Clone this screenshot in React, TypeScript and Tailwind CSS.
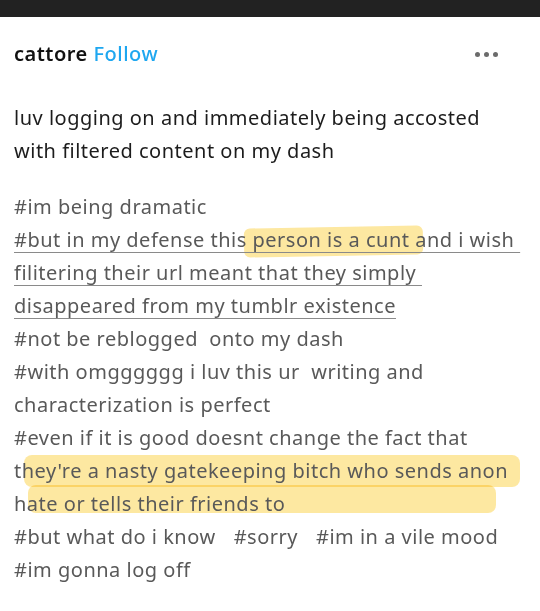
export default function App() {
  const font = { fontFamily: '"Noto Sans", "Open Sans", sans-serif' };
  return (
    <div className="w-[540px] h-[611px] bg-white overflow-hidden" style={font}>
      <div className="h-[17px] bg-[#222222]" />

      {/* Post header */}
      <div className="flex items-center justify-between pl-[14px] pr-[42px] h-[40px] mt-[17px]">
        <div className="text-[20px] font-semibold leading-none tracking-[0.5px]">
          <span className="text-[#111111]">cattore</span>{' '}
          <span className="text-[#1ea7f0] font-medium">Follow</span>
        </div>
        <div className="flex gap-[4px]">
          <span className="w-[5px] h-[5px] rounded-full bg-[#6b6b6b]" />
          <span className="w-[5px] h-[5px] rounded-full bg-[#6b6b6b]" />
          <span className="w-[5px] h-[5px] rounded-full bg-[#6b6b6b]" />
        </div>
      </div>

      {/* Body */}
      <div className="px-[14px] mt-[27px] text-[20px] leading-[33px] tracking-[0.5px] text-[#1c1c1c]">
        <p>luv logging on and immediately being accosted</p>
        <p>with filtered content on my dash</p>
      </div>

      {/* Tags */}
      <div className="relative px-[14px] mt-[23px] text-[20px] leading-[33px] tracking-[0.5px] text-[#595959]">
        {/* highlighter strokes */}
        <div className="absolute left-[244px] top-[37px] w-[179px] h-[29px] bg-[#fde28a] opacity-80 mix-blend-multiply rounded-[6px] -rotate-[1deg]" />
        <div className="absolute left-[24px] top-[265px] w-[496px] h-[32px] bg-[#fde28a] opacity-80 mix-blend-multiply rounded-[8px]" />
        <div className="absolute left-[28px] top-[295px] w-[468px] h-[28px] bg-[#fde28a] opacity-80 mix-blend-multiply rounded-[8px]" />

        <div className="relative">
          <p>#im being dramatic</p>
          <p className="underline decoration-[#8a8a8a] decoration-1 underline-offset-[5px] whitespace-pre">
            {'#but in my defense this person is a cunt and i wish \nfilitering their url meant that they simply \ndisappeared from my tumblr existence'}
          </p>
          <p className="whitespace-pre">#not be reblogged  onto my dash</p>
          <p className="whitespace-pre">{'#with omgggggg i luv this ur  writing and\ncharacterization is perfect'}</p>
          <p className="whitespace-pre">{"#even if it is good doesnt change the fact that\nthey're a nasty gatekeeping bitch who sends anon\nhate or tells their friends to"}</p>
          <p className="flex gap-[18px]">
            <span>#but what do i know</span>
            <span>#sorry</span>
            <span>#im in a vile mood</span>
          </p>
          <p>#im gonna log off</p>
        </div>
      </div>
    </div>
  );
}
